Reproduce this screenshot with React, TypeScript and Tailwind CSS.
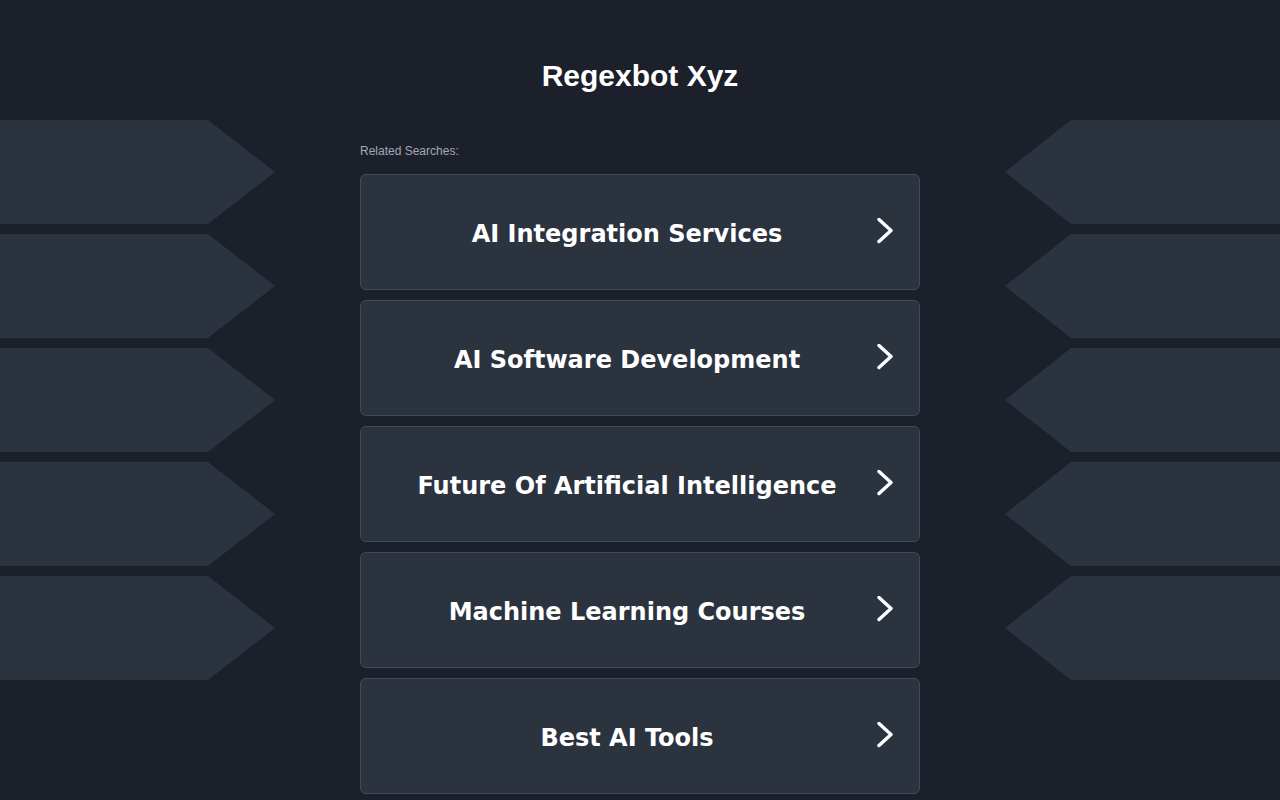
import React from "react";

const items = [
  "AI Integration Services",
  "AI Software Development",
  "Future Of Artificial Intelligence",
  "Machine Learning Courses",
  "Best AI Tools",
];

function LeftArrow() {
  return (
    <svg width="275" height="104" viewBox="0 0 275 104" className="block">
      <polygon points="0,0 208,0 275,52 208,104 0,104" fill="#2b333f" />
    </svg>
  );
}

function RightArrow() {
  return (
    <svg width="275" height="104" viewBox="0 0 275 104" className="block">
      <polygon points="0,52 66,0 275,0 275,104 66,104" fill="#2b333f" />
    </svg>
  );
}

function Chevron() {
  return (
    <svg width="20" height="28" viewBox="0 0 20 28" className="block">
      <path d="M4 1.5 L16 12.5 L4 23.5" fill="none" stroke="#ffffff" strokeWidth="3.4" strokeLinecap="round" strokeLinejoin="round" />
    </svg>
  );
}

export default function App() {
  return (
    <div className="min-h-screen w-full bg-[#1c202b] flex justify-between overflow-hidden">
      <div className="w-[275px] pt-[120px] flex flex-col gap-[10px]">
        {[0, 1, 2, 3, 4].map((i) => (
          <LeftArrow key={i} />
        ))}
      </div>
      <div className="w-[560px] flex flex-col">
        <h1 className="pt-[58px] h-[94px] text-center text-[30px] leading-[36px] font-bold text-white font-['Liberation_Sans',Arial,sans-serif]">
          Regexbot Xyz
        </h1>
        <div className="mt-[49px] mb-[15px] text-[12px] leading-[16px] text-[#a3a9b4] font-['Liberation_Sans',Arial,sans-serif]">
          Related Searches:
        </div>
        <div className="flex flex-col gap-[10px]">
          {items.map((t) => (
            <div
              key={t}
              className="h-[116px] rounded-[6px] border border-[#414a56] bg-[#2b333f] flex items-center pl-[18px] pr-[24px]"
            >
              <div className="flex-1 pt-[3px] text-center text-white font-bold text-[24px] leading-[32px] font-['DejaVu_Sans',Verdana,sans-serif]">
                {t}
              </div>
              <Chevron />
            </div>
          ))}
        </div>
      </div>
      <div className="w-[275px] pt-[120px] flex flex-col gap-[10px]">
        {[0, 1, 2, 3, 4].map((i) => (
          <RightArrow key={i} />
        ))}
      </div>
    </div>
  );
}
